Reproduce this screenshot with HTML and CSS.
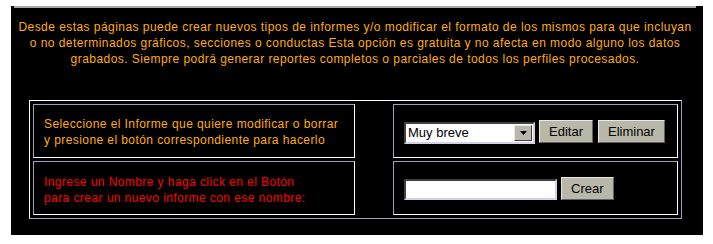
FILE: index.html
```html
<!doctype html>
<html lang="es">
<head>
	<meta charset="UTF-8">
	<title>Informes</title>
	<link rel="stylesheet" href="styles.css">
</head>
<body>
	<div class="panel">
		<div class="rule"></div>
		<p class="intro">
			Desde estas páginas puede crear nuevos tipos de informes y/o modificar el formato de los mismos para que incluyan<br>
			o no determinados gráficos, secciones o conductas Esta opción es gratuita y no afecta en modo alguno los datos<br>
			grabados. Siempre podrá generar reportes completos o parciales de todos los perfiles procesados.
		</p>
		<div class="grid">
			<div class="cell msg">Seleccione el Informe que quiere modificar o borrar<br>y presione el botón correspondiente para hacerlo</div>
			<div class="spacer"></div>
			<div class="cell ctrl">
				<div class="combo">
					<select class="sel">
						<option>Muy breve</option>
					</select>
					<span class="arrow"><svg width="7" height="4" viewBox="0 0 7 4"><path d="M0 0h7L3.5 4z" fill="#000"/></svg></span>
				</div>
				<input type="button" class="btn" value="Editar">
				<input type="button" class="btn" value="Eliminar">
			</div>
			<div class="cell msg red">Ingrese un Nombre y haga click en el Botón<br>para crear un nuevo informe con ese nombre:</div>
			<div class="spacer"></div>
			<div class="cell ctrl">
				<input type="text" class="name">
				<input type="button" class="btn" value="Crear">
			</div>
		</div>
	</div>
</body>
</html>
```

FILE: styles.css
```css
body{ margin: 0; background: #fff; font-family: "Liberation Sans", Arial, sans-serif;}
.panel{ margin: 6px 10px 0 11px; height: 229px; background: #000; padding: 0 7px 0 3px; overflow: hidden;}
.rule{ height: 2px; background: #a8a8a8;}
.intro{ margin: 11px 0 0; color: #ffad00; font-size: 12px; line-height: 16px; text-align: center; letter-spacing: 0.45px;}
.grid{ display: grid; grid-template-columns: 322px 32px 285px; grid-template-rows: 54px 54px; gap: 3px; padding: 3px; width: 645px; margin: 33px 0 0 15px;
	border: 1px solid; border-color: #fff #a0a0b8 #a0a0b8 #fff;}
.cell{ border: 1px solid; border-color: #a0a0b8 #fff #fff #a0a0b8; display: flex; align-items: center;}
.msg{ padding: 2px 0 0 10px; color: #ffad00; font-size: 12px; line-height: 16px; letter-spacing: 0.42px;}
.red{ color: #f00; padding-top: 4px;}
.ctrl{ padding: 0 0 0 10px; gap: 4px;}
.combo{ display: flex; width: 131px; height: 22px; box-sizing: border-box; border: 2px solid; border-color: #404040 #d4d0e8 #d4d0e8 #404040; background: #fff; margin-top: 3px;}
.sel{ appearance: none; -webkit-appearance: none; flex: 1; min-width: 0; border: 0; background: #fff; font: 13px "Liberation Sans", Arial, sans-serif; padding: 0 2px; margin: 0; color: #000; outline: none;}
.arrow{ width: 16px; display: flex; align-items: center; justify-content: center; background: #b8b8ac; border: 1px solid; border-color: #e8e8e0 #404040 #404040 #e8e8e0; margin: 1px;}
.btn{ height: 23px; margin: 0; padding: 0 9px; background: #b8b8aa; color: #000; font: 13px "Liberation Sans", Arial, sans-serif; border: 1px solid; border-color: #e8e8e0 #606060 #606060 #e8e8e0;}
.btn + .btn{ margin-left: 1px;}
.name{ width: 153px; height: 21px; box-sizing: border-box; margin: 2px 0 0; border: 2px solid; border-color: #404040 #d4d0e8 #d4d0e8 #404040; padding: 0 2px; font: 13px "Liberation Sans", Arial, sans-serif; outline: none;}
```
